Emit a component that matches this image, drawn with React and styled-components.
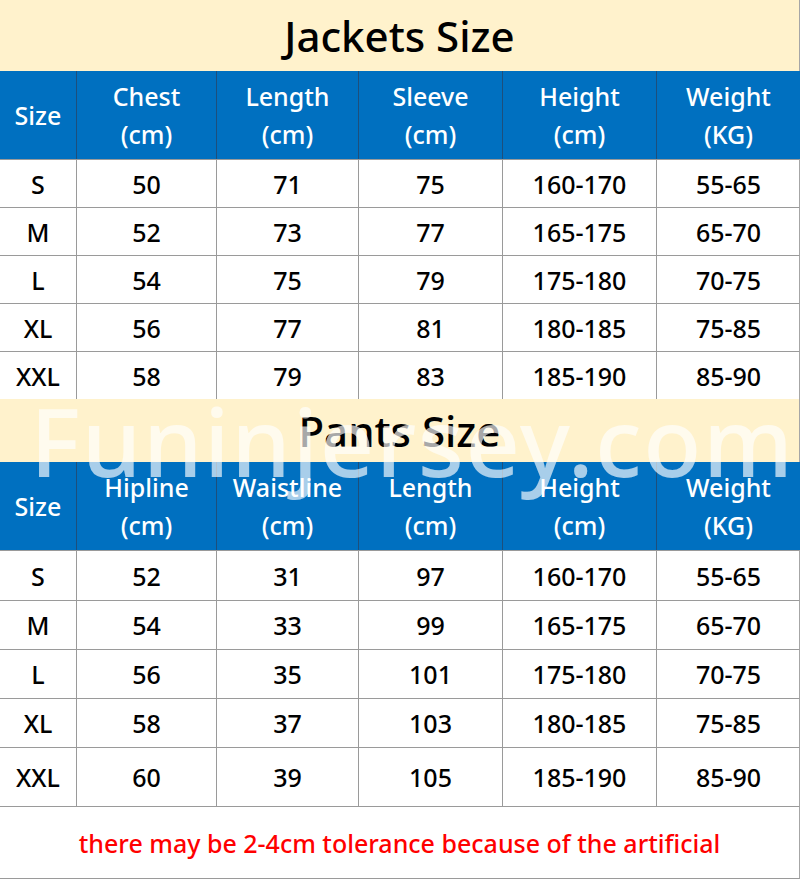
import React from 'react'
import styled, { createGlobalStyle } from 'styled-components'

const GlobalStyle = createGlobalStyle`
  html, body {
    margin: 0;
    padding: 0;
    background: #ffffff;
  }
  body {
    font-family: "Noto Sans", "Open Sans", sans-serif;
  }
`

const COLS = '77px 140px 142px 144px 154px 143px'

const Page = styled.div`
  position: relative;
  width: 800px;
  height: 879px;
  overflow: hidden;
  background: #ffffff;
`

const TitleBar = styled.div`
  height: ${props => props.h}px;
  display: flex;
  align-items: center;
  justify-content: center;
  background: #fff2cc;
  color: #000;
  font-size: 42px;
  font-weight: 500;
  border-right: 1px solid #a6a6a6;
  box-sizing: border-box;
`

const HeadRow = styled.div`
  display: grid;
  grid-template-columns: ${COLS};
  height: 88px;
  background: #0070c0;
  color: #fff;
`

const HeadCell = styled.div`
  display: flex;
  flex-direction: column;
  align-items: center;
  justify-content: center;
  font-size: 25px;
  font-weight: 500;
  line-height: 38px;
  border-right: 1px solid #1d4f7c;
  &:last-child {
    border-right: none;
  }
`

const Row = styled.div`
  display: grid;
  grid-template-columns: ${COLS};
  height: ${props => props.h}px;
  border-top: 1px solid #9a9a9a;
  box-sizing: border-box;
  border-right: 1px solid #a6a6a6;
`

const Cell = styled.div`
  display: flex;
  align-items: center;
  justify-content: center;
  font-size: 25px;
  font-weight: 500;
  color: #000;
  border-right: 1px solid #9a9a9a;
  &:last-child {
    border-right: none;
  }
`

const Footer = styled.div`
  height: 73px;
  display: flex;
  align-items: center;
  justify-content: center;
  color: #ff0000;
  font-size: 25px;
  font-weight: 500;
  border-top: 1px solid #9a9a9a;
  border-bottom: 1px solid #9a9a9a;
  border-right: 1px solid #a6a6a6;
  box-sizing: border-box;
`

const Watermark = styled.div`
  position: absolute;
  left: 30px;
  top: 393px;
  font-size: 95px;
  line-height: 1;
  font-weight: 500;
  letter-spacing: 1.6px;
  color: rgba(255, 255, 255, 0.66);
  pointer-events: none;
  white-space: nowrap;
`

const jackets = {
  title: 'Jackets Size',
  head: [['Size'], ['Chest', '(cm)'], ['Length', '(cm)'], ['Sleeve', '(cm)'], ['Height', '(cm)'], ['Weight', '(KG)']],
  rows: [
    ['S', '50', '71', '75', '160-170', '55-65'],
    ['M', '52', '73', '77', '165-175', '65-70'],
    ['L', '54', '75', '79', '175-180', '70-75'],
    ['XL', '56', '77', '81', '180-185', '75-85'],
    ['XXL', '58', '79', '83', '185-190', '85-90'],
  ],
  heights: [48, 48, 48, 48, 48],
}

const pants = {
  title: 'Pants Size',
  head: [['Size'], ['Hipline', '(cm)'], ['Waistline', '(cm)'], ['Length', '(cm)'], ['Height', '(cm)'], ['Weight', '(KG)']],
  rows: [
    ['S', '52', '31', '97', '160-170', '55-65'],
    ['M', '54', '33', '99', '165-175', '65-70'],
    ['L', '56', '35', '101', '175-180', '70-75'],
    ['XL', '58', '37', '103', '180-185', '75-85'],
    ['XXL', '60', '39', '105', '185-190', '85-90'],
  ],
  heights: [50, 49, 49, 49, 59],
}

const SizeTable = ({ data, titleH }) => (
  <>
    <TitleBar h={titleH}>{data.title}</TitleBar>
    <HeadRow>
      {data.head.map((lines, i) => (
        <HeadCell key={i}>
          {lines.map(l => <span key={l}>{l}</span>)}
        </HeadCell>
      ))}
    </HeadRow>
    {data.rows.map((r, i) => (
      <Row key={r[0]} h={data.heights[i]}>
        {r.map((v, j) => <Cell key={j}>{v}</Cell>)}
      </Row>
    ))}
  </>
)

const App = () => {
  return (
    <Page>
      <GlobalStyle />
      <SizeTable data={jackets} titleH={71} />
      <SizeTable data={pants} titleH={63} />
      <Footer>there may be 2-4cm tolerance because of the artificial</Footer>
      <Watermark>Funinjersey.com</Watermark>
    </Page>
  )
}

export default App
